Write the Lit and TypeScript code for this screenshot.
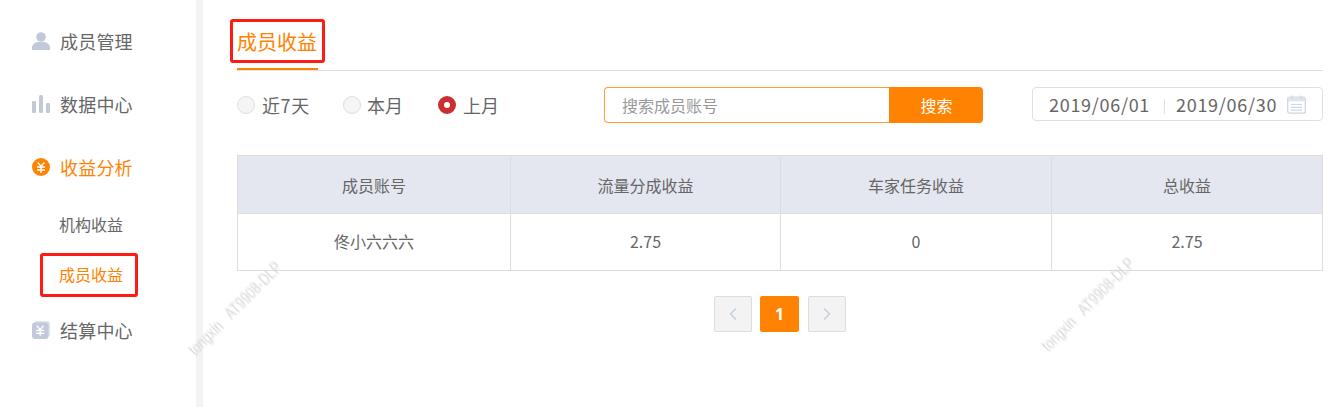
import { LitElement, html, css, svg } from "lit";
import { customElement } from "lit/decorators.js";

const userIcon = svg`<svg width="18" height="18" viewBox="0 0 18 18"><circle cx="9" cy="5" r="4.8" fill="#c1c9da"/><path d="M0 18v-2.2C0 12.6 3 10.4 6 10h6c3 .4 6 2.6 6 5.8V18z" fill="#c1c9da"/></svg>`;
const barsIcon = svg`<svg width="18" height="18" viewBox="0 0 18 18"><rect x="0" y="6" width="4" height="12" rx="1.2" fill="#c1c9da"/><rect x="7" y="0" width="4" height="18" rx="1.5" fill="#c1c9da"/><rect x="14" y="8" width="4" height="10" rx="1.2" fill="#c1c9da"/></svg>`;
const yenPath = `M5.6 4.4 9 8.2l3.4-3.8M5 9h8M5 12h8M9 8.2V15`;
const yenIcon = svg`<svg width="18" height="18" viewBox="0 0 18 18"><circle cx="9" cy="9" r="9" fill="#ff8200"/><path d="${yenPath}" fill="none" stroke="#fff" stroke-width="1.5"/></svg>`;
const settleIcon = svg`<svg width="18" height="18" viewBox="0 0 18 18"><rect x="2" y="0" width="16" height="16" rx="3" fill="#dfe3ec"/><rect x="0" y="1.5" width="16.5" height="16.5" rx="3" fill="#c1c9da"/><path d="M4.8 4.6 8.2 8.6l3.4-4M4.2 9.4h8M4.2 12.2h8M8.2 8.6v6.2" fill="none" stroke="#fff" stroke-width="1.4"/></svg>`;
const calIcon = svg`<svg width="19" height="19" viewBox="0 0 19 19"><rect x=".7" y="2.2" width="17.6" height="16" rx="2" fill="none" stroke="#cfd6e4" stroke-width="1.3"/><rect x="1" y="2.5" width="17" height="3.8" fill="#dfe3ec"/><path d="M5 .5v3.4M14 .5v3.4" stroke="#cfd6e4" stroke-width="1.3"/><path d="M4 9.5h11M4 12.3h11M4 15.1h11" stroke="#cfd6e4" stroke-width="1.2"/></svg>`;
const chevL = svg`<svg width="10" height="14" viewBox="0 0 10 14"><path d="M8 1.5 2.5 7 8 12.5" fill="none" stroke="#c6cfdf" stroke-width="1.5"/></svg>`;
const chevR = svg`<svg width="10" height="14" viewBox="0 0 10 14"><path d="M2 1.5 7.5 7 2 12.5" fill="none" stroke="#c6cfdf" stroke-width="1.5"/></svg>`;

@customElement("app-root")
export class AppRoot extends LitElement {
  static styles = css`
    :host {
      display: block;
      position: relative;
      width: 1343px;
      height: 407px;
      overflow: hidden;
      background: #fff;
      color: #666;
      font-family: "Noto Sans CJK SC", "Liberation Sans", sans-serif;
    }
    .page { display: flex; height: 407px; }
    .side {
      flex: none;
      padding-top: 9px;
      box-sizing: border-box;
      border-right: 7px solid #f3f3f3;
      width: 203px;
    }
    .item {
      height: 63px;
      display: flex;
      align-items: center;
      padding-left: 32px;
      gap: 10px;
      font-size: 18px;
      letter-spacing: .2px;
      color: #666;
    }
    .item svg { display: block; }
    .item.on { color: #ff8200; }
    .sub {
      height: 50px;
      box-sizing: border-box;
      padding-top: 2px;
      display: flex;
      align-items: center;
      padding-left: 59px;
      font-size: 16px;
    }
    .sub.on { color: #ff8200; }
    .main { flex: 1; padding: 0 20px 0 34px; min-width: 0; }
    .tabs { height: 71px; box-sizing: border-box; border-bottom: 1px solid #e0e0e0; display: flex; }
    .tab {
      height: 70px;
      width: 81px;
      box-sizing: border-box;
      border-bottom: 2px solid #ff8200;
      font-size: 20px;
      line-height: 20px;
      padding-top: 32px;
      white-space: nowrap;
      color: #ff8200;
    }
    .filters { display: flex; align-items: flex-start; height: 84px; padding-top: 16px; box-sizing: border-box; }
    .radios { display: flex; align-items: center; height: 36px; width: 367px; flex: none; }
    .radio { display: flex; align-items: center; gap: 7px; font-size: 18px; }
    .r1 { width: 106px; letter-spacing: .6px; }
    .r2 { width: 95px; gap: 6px; }
    .dot {
      width: 18px; height: 18px; box-sizing: border-box;
      border: 1px solid #dedede; border-radius: 50%; background: #f5f5f5;
    }
    .dot.sel { border: 6px solid #c9302f; background: #fff; }
    .search { display: flex; width: 379px; height: 36px; flex: none; }
    .input {
      width: 285px; box-sizing: border-box;
      border: 1px solid #ff9f33; border-right: none;
      border-radius: 4px 0 0 4px;
      padding-left: 17px;
      display: flex; align-items: center;
      font-size: 16px; color: #999;
    }
    .btn {
      width: 94px; box-sizing: border-box; padding-left: 1px;
      background: #ff8200; color: #fff;
      border-radius: 0 4px 4px 0;
      display: flex; align-items: center; justify-content: center;
      font-size: 16px;
    }
    .date {
      margin-left: 49px;
      width: 291px; height: 34px; box-sizing: border-box;
      border: 1px solid #dcdfe6; border-radius: 4px;
      display: flex; align-items: center;
      padding-left: 16px;
      font-size: 18px;
      letter-spacing: .7px;
      color: #666;
    }
    .sep { width: 1px; height: 15px; background: #dcdfe6; margin: 5px 11px 0 14px; }
    .date svg { margin-left: 10px; display: block; }
    .table {
      display: grid;
      grid-template-columns: 273px 270px 271px 271px;
      width: 1086px;
      box-sizing: border-box;
      border-top: 1px solid #ddd;
      border-left: 1px solid #ddd;
      font-size: 16px;
    }
    .c {
      display: flex; align-items: center; justify-content: center;
      border-right: 1px solid #ddd;
      border-bottom: 1px solid #ddd;
      box-sizing: border-box;
    }
    .c.h { height: 58px; background: #e4e7ef; }
    .c.d { height: 57px; padding-bottom: 2px; }
    .pager { display: flex; justify-content: center; gap: 8px; margin-top: 25px; }
    .pg {
      width: 38px; height: 36px; box-sizing: border-box;
      border: 1px solid #ddd; border-radius: 2px; background: #f3f3f3;
      display: flex; align-items: center; justify-content: center;
    }
    .pg.cur {
      width: 39px; margin-right: 1px; border: none; background: #ff8200; color: #fff;
      font-weight: 700; font-size: 16px;
      font-family: "Open Sans", sans-serif;
    }
    .note {
      position: absolute;
      box-sizing: border-box;
      border: 3px solid #ff1a12;
      border-radius: 3px;
      pointer-events: none;
    }
    .n1 { left: 230px; top: 19px; width: 95px; height: 44px; }
    .n2 { left: 40px; top: 253px; width: 98px; height: 44px; }
    .wm {
      position: absolute;
      font-family: "Liberation Sans", sans-serif;
      font-size: 13px;
      white-space: pre;
      color: #d6d6d6;
      filter: blur(.8px);
      transform: rotate(-45deg) scale(.98, 1.25);
      transform-origin: left bottom;
      pointer-events: none;
    }
    .w1 { left: 198px; top: 344px; }
    .w2 { left: 1051px; top: 340px; }
  `;

  render() {
    return html`
      <div class="page">
        <nav class="side">
          <div class="item">${userIcon}<span>成员管理</span></div>
          <div class="item">${barsIcon}<span>数据中心</span></div>
          <div class="item on">${yenIcon}<span>收益分析</span></div>
          <div class="sub">机构收益</div>
          <div class="sub on">成员收益</div>
          <div class="item">${settleIcon}<span>结算中心</span></div>
        </nav>
        <main class="main">
          <div class="tabs"><div class="tab">成员收益</div></div>
          <div class="filters">
            <div class="radios">
              <div class="radio r1"><i class="dot"></i>近7天</div>
              <div class="radio r2"><i class="dot"></i>本月</div>
              <div class="radio"><i class="dot sel"></i>上月</div>
            </div>
            <div class="search">
              <div class="input">搜索成员账号</div>
              <div class="btn">搜索</div>
            </div>
            <div class="date">
              <span>2019/06/01</span><i class="sep"></i><span>2019/06/30</span>${calIcon}
            </div>
          </div>
          <div class="table">
            <div class="c h">成员账号</div>
            <div class="c h">流量分成收益</div>
            <div class="c h">车家任务收益</div>
            <div class="c h">总收益</div>
            <div class="c d">佟小六六六</div>
            <div class="c d">2.75</div>
            <div class="c d">0</div>
            <div class="c d">2.75</div>
          </div>
          <div class="pager">
            <div class="pg">${chevL}</div>
            <div class="pg cur">1</div>
            <div class="pg">${chevR}</div>
          </div>
        </main>
      </div>
      <div class="note n1"></div>
      <div class="note n2"></div>
      <div class="wm w1">tongxin   AT9908-DLP</div>
      <div class="wm w2">tongxin   AT9908-DLP</div>
    `;
  }
}
